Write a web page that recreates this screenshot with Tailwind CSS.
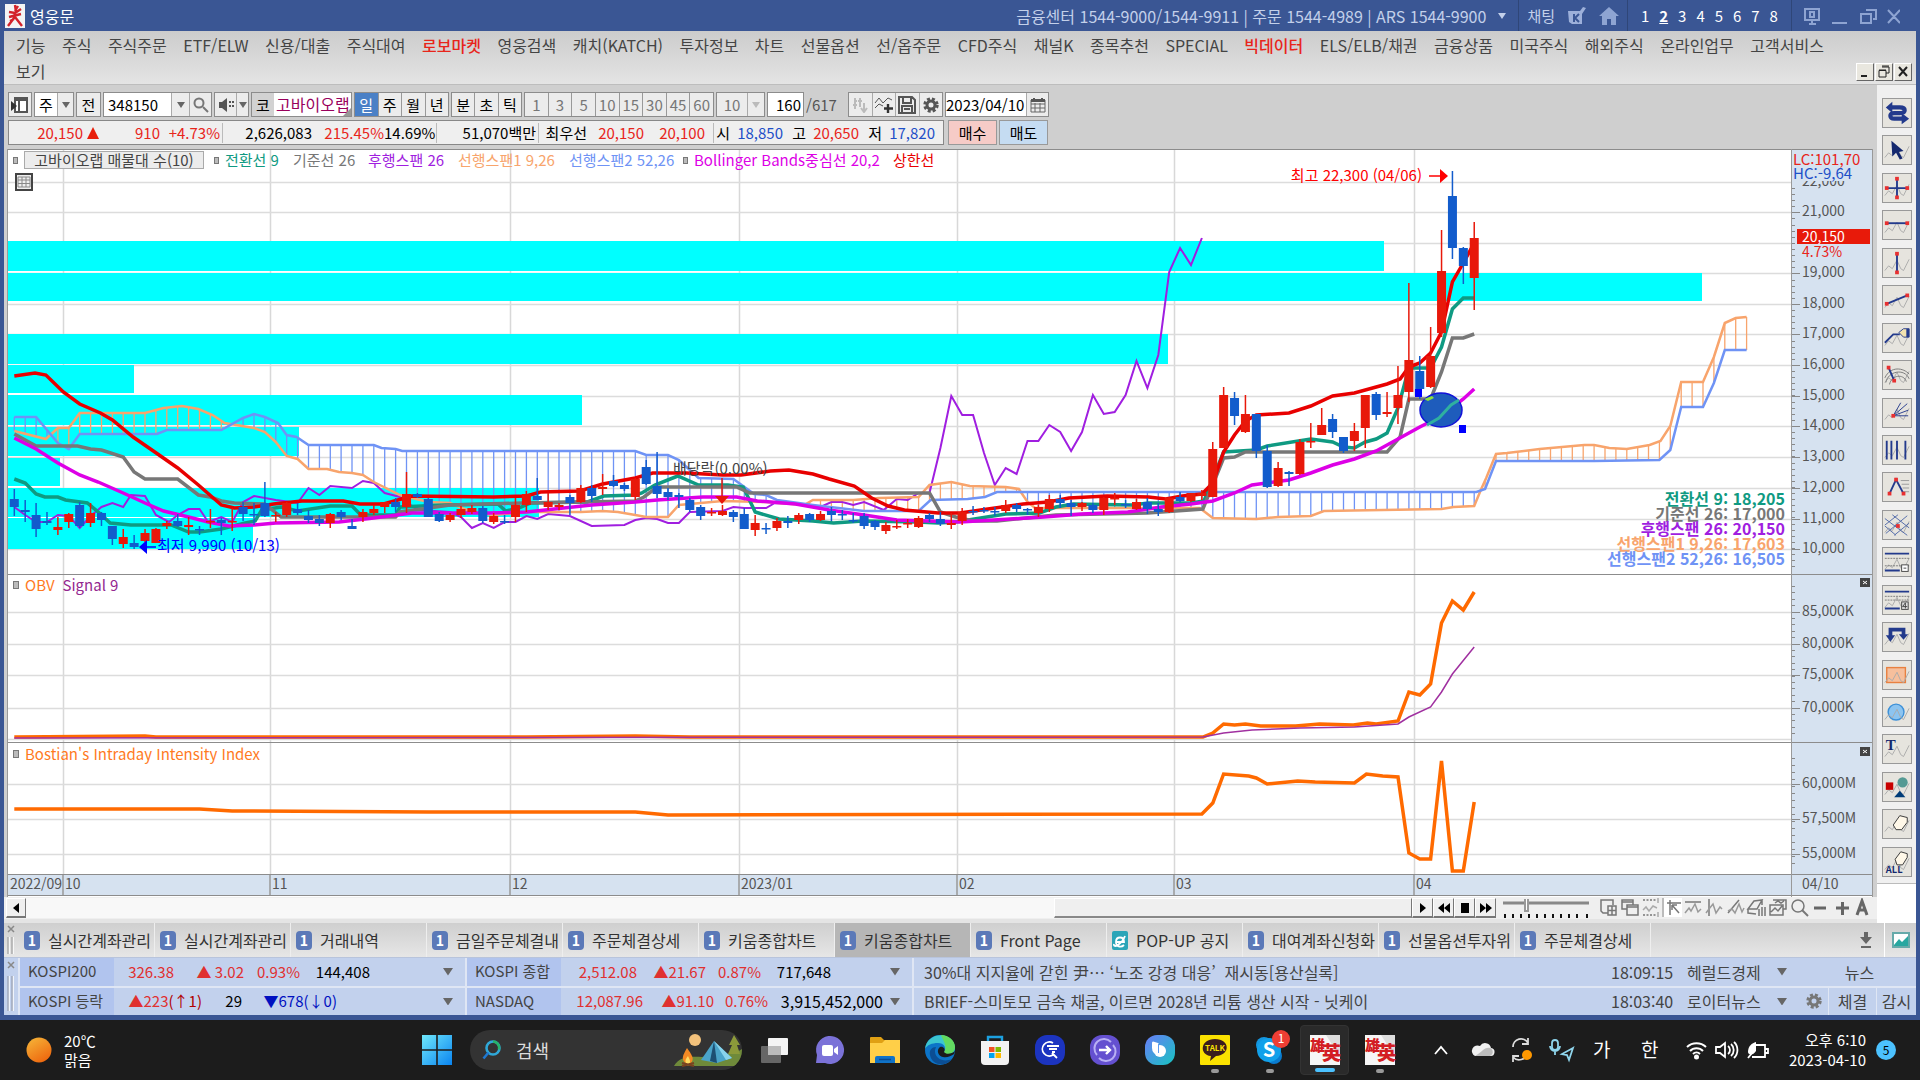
<!DOCTYPE html>
<html lang="ko">
<head>
    <meta charset="UTF-8">
    <meta name="viewport" content="width=device-width, initial-scale=1.0">
    <title>영웅문</title>
    <script src="https://cdn.jsdelivr.net/npm/@tailwindcss/browser@4"></script>
</head>
<body class="h-screen flex flex-col overflow-hidden bg-[#3a5694] font-['Noto_Sans_CJK_KR',sans-serif] text-base leading-5 text-[#444] whitespace-nowrap">

    <!-- title bar -->
    <header class="h-[31px] shrink-0 flex items-center pl-[5px] pr-5 text-[#c3d0ea]">
        <svg class="w-5 h-6 mr-[5px]" viewBox="0 0 20 24"><rect width="20" height="24" fill="#f4f4f4"/><path d="M10 1l1 7M13 2l-3 5M4 8l6 1 6-4M4 13l12-3M10 8l-1 6-6 8M10 13l7 9M5 17l4-2" stroke="#d3222a" stroke-width="2.4" fill="none"/></svg>
        <span class="text-white">영웅문</span>
        <div class="ml-auto flex items-center h-full">
            <span>금융센터 1544-9000/1544-9911 | 주문 1544-4989 | ARS 1544-9900</span>
            <svg class="w-2 h-2 ml-3" viewBox="0 0 8 8"><path d="M0 1h8L4 7z" fill="#c3d0ea"/></svg>
            <div class="w-px h-full bg-[#2f4678] ml-3 mr-2"></div>
            <button class="text-[15px]">채팅</button>
            <svg class="w-5 h-5 ml-3" viewBox="0 0 20 20"><path d="M1 5h12l3-4 3 1-4 6v10H5L2 16z" fill="#9db0da"/><path d="M7 8v8M12 8l-4 4 4 4" stroke="#3a5694" stroke-width="2" fill="none"/></svg>
            <svg class="w-5 h-5 ml-3 mr-2" viewBox="0 0 20 20"><path d="M10 1L0 10h3v9h5v-6h4v6h5v-9h3z" fill="#8ea4d2"/></svg>
            <div class="w-px h-full bg-[#2f4678]"></div>
            <nav class="flex w-[163px] justify-around px-2 text-white text-[15px]">
                <button>1</button><button class="underline font-bold">2</button><button>3</button><button>4</button><button>5</button><button>6</button><button>7</button><button>8</button>
            </nav>
            <div class="w-px h-full bg-[#2f4678] mr-3"></div>
            <svg class="w-24 h-5" viewBox="0 0 96 20" fill="none" stroke="#8ea4d2" stroke-width="2"><path d="M1 3h14v11H1zM5 18h7M8 14v4M6 6h4v5H6zM28 17h15M62 4h10v9h-3M57 8h10v9H57zM84 4l12 13M96 4L84 17"/></svg>
        </div>
    </header>

    <!-- menu -->
    <div class="h-[54px] shrink-0 mx-1 pl-3 pr-1 pt-1 bg-linear-to-b from-[#cccccc] to-[#e4e4e4] border-b border-[#bdbdbd]">
        <nav class="flex justify-between max-w-[1808px] h-5 items-center">
            <button>기능</button><button>주식</button><button>주식주문</button><button>ETF/ELW</button><button>신용/대출</button><button>주식대여</button><button class="text-[#e8251b] font-medium">로보마켓</button><button>영웅검색</button><button>캐치(KATCH)</button><button>투자정보</button><button>차트</button><button>선물옵션</button><button>선/옵주문</button><button>CFD주식</button><button>채널K</button><button>종목추천</button><button>SPECIAL</button><button class="text-[#e8251b] font-medium">빅데이터</button><button>ELS/ELB/채권</button><button>금융상품</button><button>미국주식</button><button>해외주식</button><button>온라인업무</button><button>고객서비스</button>
        </nav>
        <div class="flex justify-between items-start mt-1.5 h-5">
            <button>보기</button>
            <div class="flex gap-px mt-0.5">
                <button aria-label="최소화" class="w-[18px] h-[18px] bg-[#e9e7df] border border-white border-r-[#666] border-b-[#666]"><svg viewBox="0 0 16 16"><path d="M4 12h6" stroke="#222" stroke-width="2"/></svg></button>
                <button aria-label="이전 크기로" class="w-[18px] h-[18px] bg-[#e9e7df] border border-white border-r-[#666] border-b-[#666]"><svg viewBox="0 0 16 16" fill="none" stroke="#222"><path d="M6 3h7v6h-3M6 2h7M3 6.500h7V13H3zM3 6h7"/></svg></button>
                <button aria-label="닫기" class="w-[18px] h-[18px] bg-[#e9e7df] border border-white border-r-[#666] border-b-[#666]"><svg viewBox="0 0 16 16"><path d="M4 3l8 9M12 3l-8 9" stroke="#222" stroke-width="2"/></svg></button>
            </div>
        </div>
    </div>

    <div class="flex flex-1 min-h-0 mx-1 bg-[#cfcfcf]">
        <main class="flex-1 min-w-0 flex flex-col">

            <!-- chart toolbar -->
            <div class="h-[35px] shrink-0 flex items-center pt-1 pl-1 gap-0.5 text-[15px] text-black [&>div]:h-[25px] [&>div]:flex [&>div]:border [&>div]:border-[#8c8c8c] [&>div]:bg-[#ececec] [&_button]:h-full [&_button]:grid [&_button]:place-items-center">
                <div class="w-6"><button aria-label="목록" class="w-full"><svg class="w-5 h-5" viewBox="0 0 20 20"><path d="M5 3h12v14H5zM5 5h12M9 5v12" stroke="#555" stroke-width="2" fill="#fff"/><path d="M1 6l6 5-6 5z" fill="#333"/></svg></button></div>
                <div class="w-10"><button class="w-[22px] bg-white">주</button><button aria-label="종류" class="w-4 border-l border-[#aaa]"><svg class="w-2" viewBox="0 0 8 6"><path d="M0 0h8L4 6z" fill="#666"/></svg></button></div>
                <div class="w-[25px]"><button class="w-full">전</button></div>
                <div class="w-[109px]"><input aria-label="종목코드" value="348150" class="w-[67px] pl-1 bg-white"><button aria-label="종목 목록" class="w-[18px] border-l border-[#aaa]"><svg class="w-2" viewBox="0 0 8 6"><path d="M0 0h8L4 6z" fill="#666"/></svg></button><button aria-label="검색" class="w-[22px] border-l border-[#aaa]"><svg class="w-4" viewBox="0 0 16 16" fill="none" stroke="#777" stroke-width="2"><circle cx="6" cy="6" r="4.500"/><path d="M10 10l5 5"/></svg></button></div>
                <div class="w-[35px]"><button aria-label="소리" class="w-[21px]"><svg class="w-4" viewBox="0 0 16 16" fill="#555"><path d="M1 5h3l5-4v14l-5-4H1zM11 4h2v2h-2zM14 4h2v2h-2zM11 8h2v2h-2zM14 8h2v2h-2z"/></svg></button><button aria-label="소리 설정" class="w-3 border-l border-[#aaa]"><svg class="w-2" viewBox="0 0 8 6"><path d="M0 0h8L4 6z" fill="#666"/></svg></button></div>
                <div class="w-[101px] relative"><button class="w-[22px] bg-[#d2d2d2]">코</button><span class="flex-1 bg-white text-base text-[#99005c] leading-[22px] pl-0.5">고바이오랩</span><svg class="absolute right-0 bottom-0 w-2 h-2" viewBox="0 0 8 8"><path d="M8 0v8H0z" fill="#999"/></svg></div>
                <div class="w-[95px] divide-x divide-[#999] *:flex-1"><button class="bg-[#4a80c6] text-white">일</button><button>주</button><button>월</button><button>년</button></div>
                <div class="w-[71px] divide-x divide-[#999] *:flex-1"><button>분</button><button>초</button><button>틱</button></div>
                <div class="w-[190px] divide-x divide-[#999] *:flex-1 text-[#777]"><button>1</button><button>3</button><button>5</button><button>10</button><button>15</button><button>30</button><button>45</button><button>60</button></div>
                <div class="w-[49px] text-[#777]"><button class="w-[30px]">10</button><button aria-label="주기" class="w-4 border-l border-[#aaa]"><svg class="w-2" viewBox="0 0 8 6"><path d="M0 0h8L4 6z" fill="#bbb"/></svg></button></div>
                <div class="w-[37px]"><input aria-label="봉 개수" value="160" class="w-full bg-white text-right pr-0.5"></div>
                <span class="text-[#555] w-10">/617</span>
                <div class="w-[95px] divide-x divide-[#aaa] *:flex-1">
                    <button aria-label="캔들"><svg class="w-4" viewBox="0 0 16 16" stroke="#bbb" stroke-width="2" fill="none"><path d="M3 1v11M8 1v9M2 4h3M1 8h4M6 4h4M12 6v9M9 11l3 4 3-4"/></svg></button>
                    <button aria-label="지표 추가"><svg class="w-5" viewBox="0 0 20 20" stroke="#555" fill="none"><path d="M1 8l4-5 4 5 5-5 4 2M1 13l4-4 4 2"/><path d="M14 9v9M10 13.500h9" stroke-width="2.400" stroke="#333"/></svg></button>
                    <button aria-label="저장"><svg class="w-5" viewBox="0 0 20 20" stroke="#555" stroke-width="2" fill="none"><path d="M2 2h13l3 3v13H2zM6 2v6h8V2M5 18v-7h10v7M7 14h6"/></svg></button>
                    <button aria-label="설정"><svg class="w-4" viewBox="0 0 16 16"><circle cx="8" cy="8" r="6.200" fill="none" stroke="#555" stroke-width="3" stroke-dasharray="2.900 2"/><circle cx="8" cy="8" r="4" fill="none" stroke="#555" stroke-width="3"/></svg></button>
                </div>
                <div class="w-[104px]"><input aria-label="날짜" value="2023/04/10" class="w-20 bg-white"><button aria-label="달력" class="w-[22px] border-l border-[#aaa]"><svg class="w-4" viewBox="0 0 16 16"><path d="M1 3h14v12H1zM1 7h14M1 11h14M5 6v9M10 6v9" stroke="#666" fill="none"/><path d="M1 2h14v3H1zM3 1h2v2H3zM11 1h2v2h-2z" fill="#555"/></svg></button></div>
            </div>

            <!-- quote strip -->
            <div class="h-[29px] shrink-0 flex pl-1 pb-1 gap-1 text-[15px] text-black">
                <div class="w-[936px] flex items-center border border-[#888] bg-[#efefef] [&>span]:text-right">
                    <span class="w-[74px] text-[#e8251b]">20,150</span>
                    <svg class="w-3 h-3 ml-1" viewBox="0 0 12 12"><path d="M0 12L6 0l6 12z" fill="#e8200c"/></svg>
                    <span class="w-[61px] text-[#e8251b]">910</span>
                    <span class="w-[63px] pr-0.5 text-[#e8251b] border-r border-[#bbb]">+4.73%</span>
                    <span class="w-[89px]">2,626,083</span>
                    <span class="w-[72px] text-[#e8251b]">215.45%</span>
                    <span class="w-[53px] pr-0.5 border-r border-[#bbb]">14.69%</span>
                    <span class="w-[102px] pr-0.5 border-r border-[#bbb]">51,070백만</span>
                    <span class="w-12">최우선</span>
                    <span class="w-[57px] text-[#e8251b]">20,150</span>
                    <span class="w-[70px] pr-2 text-[#e8251b] border-r border-[#bbb]">20,100</span>
                    <span class="w-4">시</span>
                    <span class="w-[53px] text-[#1e50c8]">18,850</span>
                    <span class="w-[23px]">고</span>
                    <span class="w-[53px] text-[#e8251b]">20,650</span>
                    <span class="w-[23px]">저</span>
                    <span class="w-[53px] text-[#1e50c8]">17,820</span>
                </div>
                <button class="w-[49px] border border-[#999] bg-[#f6cbc7]">매수</button>
                <button class="w-[49px] -ml-0.5 border border-[#999] bg-[#c5dcf2]">매도</button>
            </div>

            <!-- chart -->
            <div class="relative flex-1 min-h-0 ml-[3px] mr-1">
                <svg id="chart" class="block w-full h-full" viewBox="7 149 1866 748" preserveAspectRatio="none" font-size="15"></svg>
                <div class="absolute left-1.5 top-[3px] right-24 flex items-center h-4 gap-2.5 text-[15px] [&>i]:w-[5px] [&>i]:h-[7px] [&>i]:bg-[#bbb] [&>i]:border [&>i]:border-[#777]">
                    <i></i>
                    <button class="-ml-1 w-[180px] h-[18px] leading-4 border border-[#aaa] bg-[#ececec]">고바이오랩 매물대 수(10)</button>
                    <i></i>
                    <span class="-ml-1 w-[58px] text-[#0f9a82]">전환선 9</span>
                    <span class="w-[65px] text-[#777]">기준선 26</span>
                    <span class="w-20 text-[#a01ee0]">후행스팬 26</span>
                    <span class="w-[101px] text-[#f8a46c]">선행스팬1 9,26</span>
                    <span class="w-[108px] text-[#6f93f5]">선행스팬2 52,26</span>
                    <i class="-ml-1"></i>
                    <span class="-ml-1 w-[189px] text-[#dd00e6]">Bollinger Bands중심선 20,2</span>
                    <span class="text-[#e80000]">상한선</span>
                </div>
                <button aria-label="표" class="absolute left-2 top-6 w-[18px] h-[18px] border-2 border-[#444] bg-[#eee]"><svg viewBox="0 0 14 14"><path d="M1 2h12v10H1zM1 5h12M1 8.500h12M5 2v10M9 2v10" stroke="#888" fill="none"/></svg></button>
                <div class="absolute left-1.5 top-[426px] flex items-center gap-2 text-[15px]">
                    <i class="w-[6px] h-2 bg-[#bbb] border border-[#777]"></i><span class="-ml-0.5 text-[#ff7a1e]">OBV</span><span class="text-[#93278f]">Signal 9</span>
                </div>
                <div class="absolute left-1.5 top-[595px] flex items-center gap-2 text-[15px]">
                    <i class="w-[6px] h-2 bg-[#bbb] border border-[#777]"></i><span class="-ml-0.5 text-[#ff7a1e]">Bostian's Intraday Intensity Index</span>
                </div>
            </div>

            <!-- scroll row -->
            <div class="h-[26px] shrink-0 flex items-start pt-px pl-0.5 pr-1 bg-[#efefef] border-b-4 border-[#e4e4e4]">
                <button aria-label="왼쪽" class="w-5 h-5 border border-white border-r-[#777] border-b-[#777] border-b-2 bg-[#efefef] grid place-items-center"><svg class="w-2" viewBox="0 0 8 10"><path d="M7 0v10L1 5z"/></svg></button>
                <div class="flex-1 h-5 bg-[#f8f8f8]"></div>
                <div class="w-[358px] h-5 border border-white border-r-[#777] border-b-[#888] border-b-2 bg-[#efefef]"></div>
                <div class="flex *:w-[21px] *:h-5 *:border *:border-white *:border-r-[#777] *:border-b-[#777] *:border-b-2 *:grid *:place-items-center">
                    <button aria-label="오른쪽"><svg class="w-2" viewBox="0 0 8 10"><path d="M1 0v10l6-5z"/></svg></button>
                    <button aria-label="뒤로"><svg class="w-3" viewBox="0 0 12 10"><path d="M6 0v10L0 5zM12 0v10L6 5z"/></svg></button>
                    <button aria-label="정지"><svg class="w-2" viewBox="0 0 8 10"><path d="M0 0h8v10H0z"/></svg></button>
                    <button aria-label="앞으로"><svg class="w-3" viewBox="0 0 12 10"><path d="M0 0v10l6-5zM6 0v10l6-5z"/></svg></button>
                </div>
                <label class="relative w-[104px] h-5"><input type="range" aria-label="속도" class="absolute inset-0 opacity-0"><svg class="w-[100px]" viewBox="0 0 100 20"><path d="M7 5h86" stroke="#888" stroke-width="3"/><path d="M32 1v12h-3V1" stroke="#999" stroke-width="2" fill="#fff"/><path d="M9 16v4M17 16v4M25 16v4M33 16v4M41 16v4M49 16v4M57 16v4M65 16v4M73 16v4M81 16v4M91 16v4" stroke="#111" stroke-width="2"/></svg></label>
                <svg class="w-[273px] h-5" viewBox="0 0 273 20" fill="none" stroke="#777" stroke-width="1.500">
                    <path d="M64 0h18v19H64z" fill="#fff" stroke="none"/><path d="M63 0v19" stroke="#aaa"/>
                    <path d="M8 15H3l-2-2V2h12v5M8 8h8v9H8zM8 12.500h8M12 8v9"/>
                    <path d="M22 2h11v9H22zM22 4h11"/><path d="M27 7h11v10H27zM27 9h11" fill="#efefef"/>
                    <path d="M43 2h14M43 17h14" stroke-dasharray="2 1.500"/><path d="M43 12l3-3 3 4 4-5 4 2M58 0v5M58 14v5" stroke="#aaa"/>
                    <path d="M67 5h14M70 2v15M72 7l7 8M72 7v5M72 7h5"/>
                    <path d="M85 4h16"/><path d="M85 15l4-5 2 3 4-7 3 8 3-3" stroke="#999"/>
                    <path d="M109 1v17"/><path d="M106 15l3-4 4-5 3 9 4-6 2 2" stroke="#999"/>
                    <path d="M128 15l11-13"/><path d="M128 13l4-2 3 4 4-9 3 8 2-4" stroke="#999"/>
                    <path d="M148 11l6-8 8-1-5 9zM148 11v4l8 1M162 2v5M159 11v7M162 9v9M165 9v9"/>
                    <path d="M173 2h13v9h-3M175 5l3-2 3 2 3-2"/><path d="M170 7h13v10h-13zM171 14l4-4 3 3 4-5" fill="#efefef"/>
                    <circle cx="198" cy="8" r="6"/><path d="M202 12l6 6" stroke-width="2"/>
                    <path d="M214 10h12M236 10h13M242.500 4v13" stroke="#666" stroke-width="3"/>
                    <path d="M257 17l5-14 5 14M259 12h7" stroke="#666" stroke-width="3"/>
                </svg>
            </div>
        </main>

        <!-- drawing tools -->
        <aside class="w-[39px] shrink-0 flex flex-col bg-white">
            <div id="tools" class="h-[799px] flex flex-col items-center justify-between pt-[13px] pb-[6px] bg-[#f0f0f0] border-b border-[#bbb]"></div>
        </aside>
    </div>

    <!-- window tabs -->
    <div class="h-[35px] shrink-0 mx-1 flex items-stretch bg-linear-to-b from-[#cfcfcf] to-[#e6e6e6] border-b border-[#b8c4dc]">
        <svg class="w-[15px] h-full" viewBox="0 0 15 34" fill="none" stroke="#888" stroke-width="1.500"><path d="M4 3l6 6M10 3l-6 6"/><path d="M5 14v17M9 14v17" stroke="#fff"/><path d="M4 14v17M8 14v17" stroke="#aaa"/></svg>
        <div id="tabs" class="flex flex-1 min-w-0"></div>
        <button aria-label="내리기" class="w-9 grid place-items-center"><svg class="w-3 h-4" viewBox="0 0 12 16" fill="#666"><path d="M4 0h4v5h4l-6 7-6-7h4zM1 14h10v2H1z"/></svg></button>
        <button aria-label="화면" class="w-8 border-l border-white grid place-items-center"><svg class="w-[18px] h-4" viewBox="0 0 18 16"><path d="M1 1h16v14H1z" fill="#fff" stroke="#6aa" stroke-width="2"/><path d="M2 13l5-6 3 3 6-6v10H2z" fill="#27a7a0"/></svg></button>
    </div>

    <!-- tickers -->
    <div class="h-[57px] shrink-0 mx-1 flex gap-0.5 bg-[#dfe6f4] text-[15px] text-[#444]">
        <svg class="w-[14px] h-full bg-[#c2d1ed]" viewBox="0 0 14 57" fill="none" stroke="#888" stroke-width="1.500"><path d="M4 4l6 6M10 4l-6 6"/><path d="M5 18v35M9 18v35" stroke="#fff"/><path d="M4 18v35M8 18v35" stroke="#a0a8bb"/></svg>
        <div class="w-[445px] grid grid-rows-2 gap-0.5">
            <div class="flex items-center bg-[#c2d1ed]"><span class="w-[94px] h-full pl-2 leading-[26px] bg-[#b1c4ee]">KOSPI200</span><span class="w-[60px] text-right text-[#e03030]">326.38</span><span class="w-[70px] text-right text-[#e03030]">▲ 3.02</span><span class="w-[56px] text-right text-[#e03030]">0.93%</span><span class="w-[70px] text-right text-black">144,408</span><svg class="w-2.5 ml-auto mr-3" viewBox="0 0 8 6"><path d="M0 0h8L4 6z" fill="#666"/></svg></div>
            <div class="flex items-center bg-[#c2d1ed]"><span class="w-[94px] h-full pl-2 leading-[26px] bg-[#b1c4ee]">KOSPI 등락</span><span class="w-[88px] text-right text-[#e03030]">▲223<b class="font-normal text-[#b00000]">(↑1)</b></span><span class="w-10 text-right text-black">29</span><span class="w-[95px] text-right text-[#0010c0]">▼678(↓0)</span><svg class="w-2.5 ml-auto mr-3" viewBox="0 0 8 6"><path d="M0 0h8L4 6z" fill="#666"/></svg></div>
        </div>
        <div class="w-[445px] grid grid-rows-2 gap-0.5">
            <div class="flex items-center bg-[#c2d1ed]"><span class="w-[94px] h-full pl-2 leading-[26px] bg-[#b1c4ee]">KOSPI 종합</span><span class="w-[76px] text-right text-[#e03030]">2,512.08</span><span class="w-[69px] text-right text-[#e03030]">▲21.67</span><span class="w-[55px] text-right text-[#e03030]">0.87%</span><span class="w-[70px] text-right text-black">717,648</span><svg class="w-2.5 ml-auto mr-3" viewBox="0 0 8 6"><path d="M0 0h8L4 6z" fill="#666"/></svg></div>
            <div class="flex items-center bg-[#c2d1ed]"><span class="w-[94px] h-full pl-2 leading-[26px] bg-[#b1c4ee]">NASDAQ</span><span class="w-[82px] text-right text-[#e03030]">12,087.96</span><span class="w-[71px] text-right text-[#e03030]">▲91.10</span><span class="w-[54px] text-right text-[#e03030]">0.76%</span><span class="w-[115px] text-right text-base text-black">3,915,452,000</span><svg class="w-2.5 ml-auto mr-3" viewBox="0 0 8 6"><path d="M0 0h8L4 6z" fill="#666"/></svg></div>
        </div>
        <div class="flex-1 grid grid-rows-2 gap-0.5 text-base">
            <div class="flex items-center bg-[#c2d1ed] pl-2.5"><a href="#">30%대 지지율에 갇힌 尹… ‘노조 강경 대응’&nbsp; 재시동[용산실록]</a><span class="ml-auto w-[76px]">18:09:15</span><span class="w-[90px]">헤럴드경제</span><svg class="w-2.5" viewBox="0 0 8 6"><path d="M0 0h8L4 6z" fill="#666"/></svg><button class="w-[129px] pl-4">뉴스</button></div>
            <div class="flex items-center bg-[#c2d1ed] pl-2.5"><a href="#">BRIEF-스미토모 금속 채굴, 이르면 2028년 리튬 생산 시작 - 닛케이</a><span class="ml-auto w-[76px]">18:03:40</span><span class="w-[90px]">로이터뉴스</span><svg class="w-2.5" viewBox="0 0 8 6"><path d="M0 0h8L4 6z" fill="#666"/></svg><button aria-label="설정" class="w-[41px] grid place-items-center pl-3"><svg class="w-4" viewBox="0 0 16 16"><circle cx="8" cy="8" r="6.200" fill="none" stroke="#777" stroke-width="3" stroke-dasharray="2.900 2"/><circle cx="8" cy="8" r="4" fill="none" stroke="#777" stroke-width="3"/></svg></button><button class="w-12 h-full border-l border-[#dfe6f4]">체결</button><button class="w-10 h-full border-l border-[#dfe6f4]">감시</button></div>
        </div>
    </div>
    <div class="h-[5px] shrink-0"></div>

    <!-- windows taskbar -->
    <footer class="h-[60px] shrink-0 bg-[#1c1c1c] text-white flex items-center pl-[26px] pr-6 text-[15px]">
        <div class="flex items-center gap-3 w-[396px] leading-[19px]">
            <svg class="w-[26px]" viewBox="0 0 26 26"><defs><linearGradient id="sun" x1="0" y1="0" x2=".6" y2="1"><stop stop-color="#f6b83a"/><stop offset="1" stop-color="#ee6a10"/></linearGradient></defs><circle cx="13" cy="13" r="12.500" fill="url(#sun)"/></svg>
            <span>20℃<br>맑음</span>
        </div>
        <button aria-label="시작" class="w-8"><svg class="w-[30px]" viewBox="0 0 30 30"><defs><linearGradient id="win" x1="0" y1="0" x2="1" y2="1"><stop stop-color="#6fe8fb"/><stop offset="1" stop-color="#0a84f0"/></linearGradient></defs><path d="M0 0h14.200v14.200H0zM15.800 0H30v14.200H15.800zM0 15.800h14.200V30H0zM15.800 15.800H30V30H15.800z" fill="url(#win)"/></svg></button>
        <label class="relative ml-4 mr-2 w-[272px] h-10 rounded-full bg-[#333] flex items-center overflow-hidden">
            <svg class="w-5 ml-3" viewBox="0 0 20 20" fill="none" stroke-width="2.600"><circle cx="11" cy="8" r="6.500" stroke="#2fa8d8"/><path d="M11 1.500a6.500 6.500 0 0 1 6 8" stroke="#27b36a"/><path d="M6.500 12.500L1.500 18.500" stroke="#1f78d0"/></svg>
            <input aria-label="검색" placeholder="검색" class="w-36 ml-3.5 text-lg bg-transparent placeholder:text-[#ddd]">
            <svg class="absolute right-0 bottom-0.5 w-[70px] h-9" viewBox="0 0 70 36"><path d="M2 34c4-8 14-10 28-9 20-3 32-2 40-8v17z" fill="#6f8a3a"/><circle cx="23" cy="8" r="6" fill="#f3c27c"/><path d="M42 9l-13 19 16 3 15-5z" fill="#4aa3c9"/><path d="M42 9l3 22-7-2z" fill="#1d4f73"/><path d="M42 9l18 17-6 2z" fill="#88d3ec"/><path d="M62 3l-5 10h3l-4 9h12l-3-9h3z" fill="#8c9a3a"/><path d="M15 32c-7-4-4-9 0-16 4 6 9 11 3 16z" fill="#f48a24"/><path d="M15 32c-3-3-1-5 1-8 2 4 3 6 1 8z" fill="#ffdc62"/><path d="M10 31l12 3M22 31l-12 3" stroke="#7a4220" stroke-width="2"/></svg>
        </label>
        <div id="apps" class="flex"></div>
        <div class="ml-auto flex items-center">
            <svg class="w-[370px] h-8" viewBox="0 0 370 32" fill="none" stroke="#fff" stroke-width="1.800">
                <path d="M9 20l6-7 6 7"/>
                <path d="M49 22h15a4 4 0 0 0 1-8 6 6 0 0 0-11-2 5 5 0 0 0-5 10z" fill="#f0f0f0" stroke="none"/><path d="M49 22h15a4 4 0 0 0-3-8c-3 0-5 4-12 8z" fill="#bcbcbc" stroke="none"/>
                <path d="M87 13a8 8 0 0 1 15-4M102 4v6h-6M101 19a8 8 0 0 1-14 4M87 28v-6h6" stroke="#ddd"/><circle cx="101" cy="21" r="5" fill="#ff9800" stroke="none"/>
                <path d="M126 9a3 3 0 0 1 6 0v4a3 3 0 0 1-6 0zM124 12a5 5 0 0 0 10 0M129 17v4M147 14l-11 6 5 1 2 5z" stroke="#8fd5ec"/>
                <g transform="translate(256 0)" stroke-width="2"><path d="M5 13a14 14 0 0 1 19 0M8 17a9 9 0 0 1 13 0M11 20a5 5 0 0 1 7 0"/><circle cx="14.500" cy="23" r="1.500" fill="#fff"/></g>
                <path d="M290 13h4l5-4v14l-5-4h-4zM302 12a5 5 0 0 1 0 8M305 10a8 8 0 0 1 0 12M308 8a11 11 0 0 1 0 16"/>
                <path d="M329 11h10v12h-13M339 15h3v4h-3"/><path d="M322 18c0-6 4-9 8-10v9c-3 5-8 4-8 1z" fill="#fff" stroke="none"/><path d="M322 24l4-5"/>
                <text x="167" y="23" font-size="19" fill="#fff" stroke="none">가</text>
                <text x="215" y="23" font-size="19" fill="#fff" stroke="none">한</text>
            </svg>
            <div class="flex flex-col items-end leading-5 w-[70px]"><span>오후 6:10</span><span>2023-04-10</span></div>
            <span class="ml-2.5 w-5 h-5 rounded-full bg-[#4cc2ff] text-black text-xs leading-5 text-center">5</span>
        </div>
    </footer>

    <script>
        // candles: [up, high, body top, body bottom, low], one per trading day
        const candles = [
            [0,489,499,507,516],[0,500,510,512,522],[0,503,515,529,537],[0,512,521,523,525],[1,517,527,530,535],[1,513,514,522,528],[0,502,505,526,528],[1,503,513,523,527],[0,512,513,520,526],[0,526,526,539,545],
            [1,529,537,544,548],[0,535,543,547,549],[1,529,533,541,542],[1,528,529,543,543],[1,521,523,526,529],[0,514,521,526,527],[1,517,525,527,535],[0,526,529,530,535],[1,509,521,522,528],[0,518,520,523,535],
            [1,508,521,522,531],[0,502,507,514,521],[0,503,514,515,525],[0,482,503,516,517],[1,512,515,516,522],[1,502,503,515,517],[0,503,509,513,515],[0,510,516,520,523],[0,515,519,523,526],[1,513,514,523,528],
            [0,510,512,517,520],[0,519,526,529,529],[1,509,512,517,522],[1,505,509,513,515],[1,502,502,507,513],[0,498,502,507,512],[1,472,494,507,513],[0,493,494,497,498],[0,498,499,517,517],[0,512,514,521,522],
            [1,513,515,520,522],[1,506,509,515,518],[1,505,508,512,514],[0,506,508,521,523],[1,513,516,522,524],[0,515,521,522,524],[1,498,505,517,522],[1,491,494,505,512],[0,478,496,500,500],[1,493,502,507,510],
            [1,503,505,507,510],[0,495,497,503,515],[1,485,488,502,503],[0,485,488,496,502],[1,474,487,489,495],[0,475,481,486,487],[0,483,485,489,491],[1,478,479,497,500],[0,460,467,484,485],[0,452,486,494,498],
            [0,488,492,497,500],[0,493,495,497,508],[0,498,500,510,512],[0,505,507,516,520],[1,508,512,513,516],[1,505,511,515,516],[0,510,512,517,522],[0,508,514,529,529],[1,515,523,530,536],[0,523,528,529,534],
            [1,518,521,528,531],[0,516,521,523,528],[1,513,515,520,524],[0,513,514,520,522],[1,511,514,520,521],[0,507,511,515,521],[0,510,514,515,520],[0,513,520,521,523],[0,513,516,526,529],[0,520,521,527,530],
            [1,522,525,531,534],[1,520,526,527,529],[1,519,523,524,528],[1,516,518,527,528],[0,513,515,519,522],[0,512,519,524,526],[1,513,523,525,529],[1,508,512,521,525],[0,506,511,512,515],[0,507,510,511,513],
            [0,507,511,512,516],[1,500,505,511,513],[0,503,505,509,512],[0,508,509,510,515],[1,505,507,513,517],[1,495,499,509,512],[0,495,499,503,508],[0,500,503,507,516],[1,502,503,507,511],[0,503,505,510,513],
            [1,497,498,510,515],[1,493,498,499,505],[0,500,504,505,508],[1,499,502,509,510],[0,498,502,509,514],[0,503,509,512,516],[1,497,498,512,513],[0,492,497,501,502],[1,493,493,501,502],[1,490,493,496,500],
            [1,442,449,497,497],[1,387,395,448,448],[0,392,398,416,425],[1,395,414,432,433],[0,414,414,451,458],[0,445,451,487,488],[1,462,468,486,487],[0,471,472,474,486],[1,439,442,474,475],[1,423,441,442,448],
            [1,408,425,435,435],[0,414,419,432,438],[0,437,437,451,453],[1,423,431,441,451],[1,395,395,428,448],[0,392,394,415,420],[1,392,412,414,417],[1,366,395,408,424],[1,283,360,392,402],[0,356,371,389,399],
            [1,327,356,387,388],[1,230,271,333,337],[0,171,196,248,259],[0,247,248,266,284],[1,222,238,278,310]
        ];

        // indicator lines: day index, y, day index, y ...
        const upper = [0,376,1.9,373,2.9,375,4.5,392,6,404,7.9,413,9,420,10.9,437,12.9,452,15,468,16.9,485,19,505,20.2,508,22,507,23.8,504,26.4,501,30.2,501,31.7,504,33.9,504,35.2,500,36.5,496,44,497,47,496,48.3,492,51.9,491,54,484,57,478,58.6,473,61.7,473,65,475,66.7,475,69.4,471,71.1,470,73.3,474,74.8,479,77.1,486,78.7,498,80.2,506,81.7,510,84.8,513,86.8,513,88.7,510,92.6,504,94.9,502,96.8,498,100.3,496,104.1,497,105.7,499,107.2,496,109,494,110,483,111,452,112,435,113,421,114,415,117,413,119,406,121,396,123,393,126,384,127.2,379,128,367,129,363,130,353,131,332,132,282,133,263,134,243];
        const middle = [0,438,2,449,4,463,6,475,7.7,482,10,493,12,503,13.7,511,16,517,17.8,522,19.7,526,22,525,24,523,29.8,522,33,518,36.5,513,43.6,513,47,512,53,505,57,502,59,500,63.2,497,66.3,497,68.2,501,71.7,504,74.8,510,78,515,81,520,86.8,522,89.9,520,94.5,517,98,514,102.2,512,105.3,507,108,504,110,501,112,493,113.6,485,117,480,119,473,121,465,123,459,125,451,127,439,129,427,131,416,133,399,134,389];
        const conversion = [0,479,1,483,2,494,2.8,497,4,497,4.7,500,6.7,503,7.7,512,8.8,523,10.7,525,14.4,525,16,532,17,532,19,529,21.2,523,22.1,521,22.7,510,24.5,507,26,511,29,506,31,506,31.8,515,35,515,35.4,507,39.5,505,44.4,504,45.1,511,46.3,508,47.4,503,52.6,502,54.1,496,57,495,57.6,493,58.8,485,60.9,476,62.8,485,65.5,485,66.9,487,68,512,70.2,519,73.3,521,75.2,523,77.9,521,82.9,522,84.8,523,86.4,522,88.7,518,91,514,94.1,513,95.6,507,97.2,504,102.6,505,104.1,503,108,503,109.2,501,111,452,114,450,115,446,119,439,121,442,122,447,123,448,124,442,125,439,126,433,127,408,128,368,130,368,131,347,132,309,133,298,134,298];
        const base = [0,434,2,446,5.8,446,7,449,8,450,10,457,11,472,12,479,15,479,16.9,495,18,497,19,501,20.2,503,23,504,24.5,517,35,517,35.4,512,40,505,46.6,503,57,501,57.8,497,59,487,66.3,487,67.5,493,84,493,85,512,86.4,517,88,521,90.2,521,95.6,515,104,513,109.1,509,111,458,112,457,113,452,126,452,127.2,437,128,399,130,399,131,372,132,338,133,338,134,334];
        const lagging = [0,507,1,515,2,522,3,522,4,515,5,516,6,528,7,516,8,507,9,503,10,507,10.7,495,12,496,13,515,14.2,522,15,515,16,509,17,509,17.8,522,19,517,20,522,21,502,22,496,24,500,26,503,27,488,28,495,29,486,31,488,32,481,33,483,34,493,35.4,497,37,510,40,512,41,517,42,528,43,523,44,528,45,522,46,522,47,516,48,519,49,514,51,516,53,526,56,525,57,520,58,518,59,519,60,523,61,523,62,512,65,511,66,507,67,508,69,508,69.8,503,71.7,504,74,507,75,502,76,502,77,505,78,502,79.8,510,81,499,82,500,83,493,84,493,85,448,86,396,87,415,88,415,89,453,90,485,91,468,92,474,93,441,94,441,95,425,96,432,97,451,98,432,99,395,100,414,101,412,102,395,103,361,104,388,105,355,106,272,107,248,108,265,109,238];
        const span1 = [0,431,2.9,439,4,428,5,428,6,413,12,413,13.7,408,15.4,406,16.9,409,18.2,415,19.3,423,22,428,23,432,24,442,25,456,26,459,27,469,28.7,469,29.8,472,31,473,32,475,33,482,35.4,495,38,502,40,503,42,512,44,515,47,512,52,512,54,511,55.4,512,57,515,58,517,60,517,61,505,63,503,65,501,69,502,72.5,505,73.3,500,77,500,79.4,498,83,497,84,485,86,482,87.7,486,91,487,92.2,489,93,502,93.7,508,108.8,508,110,518,114,519,116,517,119,516,120.2,511,131,509,132.1,507,134,506,134.6,490,135.1,478,136,454,137,453,140,449,144.1,445,145,445,146.4,448,148,449,150.1,445,151.1,441,152,426,153,382,155,382,156,357,157,323,158,318,159,317];
        const span2 = [0,417,2,417,4,443,5,449,6,434,13.1,434,14,430,19,430,21,418,22,414,23,417,24.2,423,25,435,25.9,437,27,445,33,445,33.7,448,35,449,35.6,451,57,451,58,455,60,455,61,460,62.8,478,66,479,67.9,494,69,495,70,500,73.3,505,78,511,83,511,84.1,500,87.5,499,89.1,497,90.2,492,134.2,492,135,489,136,461,145,461,151,460,152,450,153,407,155,407,156,383,157,350,159,350];
        const obv = [0,737,12,736,13,737,47,737,57,736,62,737,109.1,737,110,733,111,724,112,725,113,724,114.4,726,117.6,726,119.8,724,122.9,725,124.2,723,125,724,127,721,128,692,129,695,130,684,131,623,132,601,133,610,134,592];
        const signal = [0,738,109.1,737,111,733,113.6,730,118,728,123,727,127,724,128,717,130,707,131,692,132,674,134,647];
        const intensity = [0,809,17,809,20,811,38,812,57,812,60,815,109,814,110,803,111,774,113.3,776,114,778,115,784,117.8,781,119.4,782,123,783,124.1,774,125.6,776,127,777,128,853,129,859,130,859,131,761,132,871,133,871,134,802];

        const xAt = i => 14.3 + i * 10.895;

        function line(data, color, width) {
            let pts = '';
            for (let k = 0; k < data.length; k += 2) pts += `${xAt(data[k]).toFixed(1)},${data[k + 1]} `;
            return `<polyline points="${pts}" fill="none" stroke="${color}" stroke-width="${width}"/>`;
        }

        function valueAt(data, i) {
            for (let k = 2; k < data.length; k += 2) {
                if (i <= data[k]) {
                    const t = (i - data[k - 2]) / (data[k] - data[k - 2]);
                    return data[k - 1] + t * (data[k + 1] - data[k - 1]);
                }
            }
            return data[data.length - 1];
        }

        function hline(x1, x2, y, color) {
            return `<path d="M${x1} ${y + .5}H${x2}" stroke="${color}"/>`;
        }

        let out = '<rect x="7" y="149" width="1866" height="748" fill="#fff"/>';
        // price grid
        const priceY = [549, 519, 488, 457, 426, 396, 365, 334, 304, 273, 243, 212, 182];
        [...priceY, 612, 644, 675, 708, 739, 784, 819, 854].forEach(y => out += `<path d="M8 ${y + .5}H1791" stroke="#dcdcdc" stroke-width="1.500"/>`);
        // volume profile
        [[241,30,1384],[273,28,1702],[334,30,1168],[365,28,134],[395,30,582],[427,29,299],[458,28,60],[488,29,539],[518,31,253]].forEach(([y, h, x]) => {
            out += `<rect x="8" y="${y}" width="${x - 8}" height="${h}" fill="#00ffff"/>`;
        });
        const months = [[63,'10'],[270,'11'],[510,'12'],[739,'2023/01'],[957,'02'],[1174,'03'],[1414,'04']];
        // month lines stay behind the volume profile
        let back = '';
        months.forEach(([x]) => back += `<path d="M${x + .5} 150V874" stroke="#d8d8d8" stroke-width="1.500"/>`);
        out = out.replace('fill="#fff"/>', 'fill="#fff"/>' + back);

        // cloud
        for (let i = 0; i <= 159; i++) {
            const a = valueAt(span1, i), b = valueAt(span2, i);
            out += `<path d="M${xAt(i).toFixed(1)} ${a.toFixed(1)}V${b.toFixed(1)}" stroke="${b < a ? '#6f93f5' : '#f8a46c'}" stroke-width="1.300"/>`;
        }
        out += line(lagging, '#a01ee0', 2);
        out += line(span1, '#f8a46c', 2.5) + line(span2, '#6f93f5', 2.5);
        out += line(conversion, '#0f9a82', 3.5) + line(base, '#777', 3.5) + line(middle, '#dd00e6', 3.5) + line(upper, '#e80000', 3.5);
        candles.forEach(([up, h, t, b, l], i) => {
            const c = up ? '#e8180a' : '#125ccc', x = xAt(i);
            out += `<path d="M${x} ${h}V${l}" stroke="${c}" stroke-width="1.500"/><rect x="${x - 4.5}" y="${t}" width="9" height="${Math.max(b - t, 1.5)}" fill="${c}"/>`;
        });

        // marker drawn by the user
        out += '<ellipse cx="1441" cy="410" rx="21" ry="17" fill="#1e5cbc" stroke="#1212d8" stroke-width="1.500"/><path d="M1427 425l12-7 12-13 8-5" stroke="#2fb0a0" stroke-width="3" fill="none"/><path d="M1424 399l8-3 2 2-6 3z" fill="#8fe03c"/>';
        out += '<path d="M1415 389h7v8h-7zM1459 425h7v8h-7z" fill="#0000ff"/>';
        out += '<path d="M1429 176h14" stroke="#f00" stroke-width="1.500"/><path d="M1440 169l8 7-8 7z" fill="#f00"/><text x="1422" y="181" text-anchor="end" fill="#f00">최고 22,300 (04/06)</text>';
        out += '<path d="M143 547h13" stroke="#00f" stroke-width="1.500"/><path d="M147 540l-8 7 8 7z" fill="#00f"/><text x="157" y="551" fill="#00f">최저 9,990 (10/13)</text>';
        out += '<path d="M722 478v20" stroke="#e8180a" stroke-width="1.500"/><path d="M715 496h14l-7 8z" fill="#e8180a"/><text x="673" y="474" fill="#444">배당락(0.00%)</text>';
        [['전환선 9: 18,205','#0f9a82'],['기준선 26: 17,000','#777'],['후행스팬 26: 20,150','#a01ee0'],['선행스팬1 9,26: 17,603','#f8a46c'],['선행스팬2 52,26: 16,505','#6f93f5']].forEach(([t, c], k) => {
            out += `<text x="1785" y="${505 + k * 15}" text-anchor="end" font-size="16" font-weight="bold" fill="${c}">${t}</text>`;
        });

        // lower panels
        out += line(obv, '#ff6a00', 3.5) + line(signal, '#a030a0', 1.5) + line(intensity, '#ff6a00', 3.5);

        // axes
        out += '<rect x="1791" y="150" width="82" height="746" fill="#d6e2f0"/><rect x="7" y="874" width="1866" height="22" fill="#d6e2f0"/>';
        for (let y = 188; y < 570; y += 6.1) out += hline(1791, 1795, Math.round(y), '#888');
        for (let y = 586; y < 738; y += 6.4) out += hline(1791, 1795, Math.round(y), '#888');
        for (let y = 758; y < 870; y += 7) out += hline(1791, 1795, Math.round(y), '#888');
        const axis = (x, y, t) => `<text x="${x}" y="${y}" font-size="14" fill="#555">${t}</text>`;
        out += axis(1802, 186, '22,000') + '<rect x="1793" y="150" width="78" height="31" fill="#d6e2f0"/>';
        priceY.forEach((y, k) => {
            if (k === 10 || k === 12) return;
            out += hline(1791, 1800, y, '#888') + axis(1802, y + 4, `${10 + k},000`);
        });
        out += '<text x="1793" y="165" fill="#e8251b">LC:101,70</text><text x="1793" y="179" fill="#1e50c8">HC:-9,64</text>';
        out += '<rect x="1797" y="229" width="73" height="15" fill="#e81a0a"/><text x="1802" y="242" font-size="14" fill="#fff">20,150</text><text x="1802" y="257" font-size="14" fill="#e8251b">4.73%</text>';
        [[612,'85,000K'],[644,'80,000K'],[675,'75,000K'],[708,'70,000K'],[784,'60,000M'],[819,'57,500M'],[854,'55,000M']].forEach(([y, t]) => {
            out += hline(1791, 1800, y, '#888') + axis(1802, y + 4, t);
        });
        out += axis(1802, 889, '04/10') + axis(10, 889, '2022/09');
        months.forEach(([x, t]) => out += `<path d="M${x} 874v22" stroke="#999" stroke-width="1.500"/>` + axis(x + 2, 889, t));
        [149, 574, 742, 874, 895].forEach(y => out += hline(7, 1873, y, '#8c8c8c'));
        out += '<path d="M7.500 149v748M1791.500 149v748M1872.500 149v748" stroke="#999"/>';
        [583, 752].forEach(y => out += `<rect x="1860" y="${y - 5}" width="10" height="9" fill="#444"/><path d="M1863 ${y - 2}l4 3M1867 ${y - 2}l-4 3" stroke="#fff"/>`);
        document.getElementById('chart').innerHTML = out;

        // drawing tool icons
        const wave = '<path d="M2 22l4-5 4 3 5-9 4 9 3 2 6-12" stroke="#aaa" fill="none"/>';
        const dot = (x, y) => `<rect x="${x - 2}" y="${y - 2}" width="4" height="4" fill="#e83030"/>`;
        const navy = d => `<path d="${d}" stroke="#233a8c" stroke-width="2" fill="none"/>`;
        const tools = [
            ['순서', '<path d="M7 8h11c7 0 7 6 0 6h-6c-6 0-5 6 0 6h9" stroke="#233a8c" stroke-width="4.500" fill="none"/><path d="M10 2v12L3 8zM20 14v12l8-6z" fill="#233a8c"/>'],
            ['선택', wave + '<path d="M9 4l13 11-5 1 4 7-3 1-4-7-4 4z" fill="#14286e"/>'],
            ['십자선', wave + navy('M4 14h22M15 4v20') + dot(4, 14) + dot(26, 14) + dot(15, 4) + dot(15, 24)],
            ['수평선', wave + navy('M4 12h22') + dot(4, 12) + dot(26, 12)],
            ['수직선', wave + navy('M15 4v20') + dot(15, 4) + dot(15, 24)],
            ['추세선', wave + navy('M4 18L26 9') + dot(4, 18) + dot(26, 9)],
            ['연필', wave + navy('M2 19l9-9h7') + '<path d="M17 8l5-4h6v9h-6z" fill="#f2e2b0" stroke="#233a8c"/><path d="M25 4h3v9h-3z" fill="#233a8c"/>'],
            ['호', wave + '<path d="M3 22c2-12 20-16 25-4M7 24c2-10 15-12 18-3M2 17C8 4 22 6 28 13" stroke="#777" fill="none"/>' + navy('M6 6l6 14') + dot(6, 6) + dot(12, 20)],
            ['부채꼴', wave + '<path d="M11 18h16M11 18l16-6M11 18L26 5M11 18l8-14" stroke="#233a8c" fill="none"/>' + dot(11, 18)],
            ['시간대', wave + navy('M4 4v20M9 4v20M15 4v20M24 4v20')],
            ['패턴', '<path d="M19 7h9M20 11h8M21 15h7M22 19h6" stroke="#999"/>' + navy('M7 21l7-15 8 15') + dot(7, 21) + dot(14, 6) + dot(22, 21)],
            ['격자', wave + '<path d="M2 7l24 18M2 15l12 10M10 3l18 14M3 23L26 4M12 25L28 12M2 14L16 3" stroke="#5068a8" fill="none"/>' + dot(16, 15)],
            ['채널 1', wave + navy('M2 5h26M2 23h16') + '<path d="M2 10h26M2 18h26" stroke="#777" stroke-dasharray="2 1"/><rect x="20" y="17" width="7" height="7" fill="#fff" stroke="#444"/><path d="M22 20.500h3" stroke="#444"/>'],
            ['채널 4', wave + navy('M2 5h26M2 23h16') + '<path d="M2 10h26M2 14h26" stroke="#777" stroke-dasharray="2 1"/><rect x="20" y="16" width="7" height="8" fill="#ddd" stroke="#444"/><path d="M24 17l-3 4h5M24 17v6" stroke="#444" fill="none"/>'],
            ['구간', wave + '<path d="M8 13V6h14v6" stroke="#233a8c" stroke-width="4" fill="none"/><path d="M3 12h10l-5 7zM17 11h10l-5 6z" fill="#233a8c"/>'],
            ['사각형', '<rect x="4" y="6" width="20" height="16" fill="#f6bf9c" stroke="#e88040" stroke-width="1.500"/>' + wave],
            ['원', '<circle cx="14" cy="14" r="8.500" fill="#8cc4f0" stroke="#3c90d8" stroke-width="1.500"/>' + wave],
            ['문자', wave + '<text x="3" y="15" font-size="16" font-weight="bold" font-family="Liberation Serif" fill="#14286e">T</text>'],
            ['도형', wave + '<circle cx="21" cy="9" r="5.500" fill="#559a94"/><path d="M3 9h8v8H3z" fill="#c80000"/><path d="M12 25l6-7 6 7z" fill="#003c78"/>'],
            ['지우개', wave + '<path d="M11 15l7-10 8 2v5l-6 8h-6z" fill="#fff8e8" stroke="#333"/>'],
            ['모두 지우기', wave + '<path d="M13 11l6-8 7 2v4l-5 8h-6z" fill="#fff8e8" stroke="#333"/><text x="3" y="26" font-size="10" font-weight="bold" fill="#14286e">ALL</text>']
        ];
        document.getElementById('tools').innerHTML = tools.map(([name, svg]) =>
            `<button aria-label="${name}" class="w-[30px] h-[30px] border border-[#999] bg-[#e6e4de]"><svg viewBox="0 0 30 28">${svg}</svg></button>`).join('');

        // tabs
        const tabs = ['실시간계좌관리', '실시간계좌관리', '거래내역', '금일주문체결내', '주문체결상세', '키움종합차트', '키움종합차트', 'Front Page', 'POP-UP 공지', '대여계좌신청화', '선물옵션투자위', '주문체결상세'];
        document.getElementById('tabs').innerHTML = tabs.map((t, i) => {
            const badge = i === 8
                ? '<svg class="w-4 h-[19px] shrink-0" viewBox="0 0 16 19"><rect width="16" height="19" rx="2" fill="#2ba5b8"/><path d="M4 11h8c0-6-8-6-8 0s6 5 8 3M2 13c-1 5 8 0 11-8" stroke="#fff" stroke-width="1.800" fill="none"/></svg>'
                : '<span class="w-4 h-[19px] shrink-0 rounded-sm bg-[#5b79b8] text-white text-sm font-bold leading-[19px] text-center">1</span>';
            return `<button class="w-[136px] shrink-0 flex items-center gap-2 pl-[5px] overflow-hidden border-r border-[#eee] text-[#333] ${i === 6 ? 'bg-[#b6b6b6]' : ''}">${badge}<span>${t}</span></button>`;
        }).join('');

        // taskbar apps
        const hero = '<rect width="30" height="30" fill="#f6f6f6"/><path d="M16 0h14v22z" fill="#ddd"/><g fill="#d31d24" font-weight="900"><text x="0" y="16" font-size="15">雄</text><text x="12" y="25" font-size="19">英</text></g>';
        const apps = [
            ['작업 보기', '<rect x="1" y="11" width="20" height="17" rx="1" fill="#666"/><rect x="8" y="3" width="20" height="17" rx="1" fill="#f4f4f4"/><path d="M8 11h13v9H8z" fill="#bbb"/>'],
            ['채팅', '<path d="M1 28l1-8a14 14 0 1 1 8 8z" fill="#7b72d8"/><rect x="7" y="10" width="11" height="11" rx="2" fill="#fff"/><path d="M19 14l4-3v9l-4-3z" fill="#fff"/>'],
            ['파일 탐색기', '<path d="M0 3q0-1 1-1h10l3 3h15q1 0 1 1v22H0z" fill="#e0a014"/><path d="M0 8h12l3-3h15v23H0z" fill="#ffcf48"/><path d="M5 28v-5q0-2 2-2h16q2 0 2 2v5z" fill="#1073c8"/><path d="M9 24.500h12" stroke="#0a4a90" stroke-width="1.500"/>'],
            ['Edge', '<circle cx="15" cy="15" r="15" fill="#0c74c8"/><path d="M0 14C2-4 28-4 30 12c0 8-10 9-11 5 3-4 0-9-6-9C7 8 2 10 0 14z" fill="#3cc6d0"/><path d="M16 0c8 0 14 6 14 12 0 8-10 9-11 5 4-6-1-11-3-17z" fill="#62da60"/><path d="M11 12c-4 8 4 17 16 12-6 8-20 7-22-4-1-5 2-8 6-8z" fill="#0b4e94"/><path d="M15 12c-4 3-2 9 3 10 4 1 8-1 11-3l1-3c-3 3-9 4-11 1 2-3-1-6-4-5z" fill="#1c1c1c"/>'],
            ['Store', '<path d="M8 8V2h14v6" stroke="#1ca0e0" stroke-width="2.400" fill="none"/><path d="M1 6h28v20q0 4-4 4H5q-4 0-4-4z" fill="#f2f2f2"/><path d="M9 12h5.500v5H9z" fill="#f25022"/><path d="M15.500 12H21v5h-5.500z" fill="#7fba00"/><path d="M9 18h5.500v5H9z" fill="#00a4ef"/><path d="M15.500 18H21v5h-5.500z" fill="#ffb900"/>'],
            ['Quick Search', '<rect width="30" height="30" rx="12" fill="#1c34c0"/><path d="M18 8a7 7 0 1 0 0 12M17 18l5 5M12 11h12M14 14h8M17 17h3" stroke="#fff" stroke-width="1.800" fill="none"/>'],
            ['Switch', '<rect width="30" height="30" rx="12" fill="#6450d0"/><path d="M7 20a9.500 9.500 0 0 1 14-13M23 10a9.500 9.500 0 0 1-14 13" stroke="#b8b0f4" stroke-width="2" fill="none"/><path d="M9 15h10M16 11l4 4-4 4" stroke="#fff" stroke-width="2.400" fill="none"/>'],
            ['Bixby', '<defs><linearGradient id="bx" x1="0" y1="0" x2="1" y2="1"><stop stop-color="#6a7cf8"/><stop offset="1" stop-color="#16c4c0"/></linearGradient></defs><rect width="30" height="30" rx="12" fill="url(#bx)"/><path d="M8 6.500l5 1.500q1 .5 1 2v10q-7-1-7-7V8q0-1.500 1-1.500z" fill="#fff"/><circle cx="15" cy="16" r="6" fill="#fff"/><path d="M13.500 9v9" stroke="#5a9af0" stroke-width="1"/>'],
            ['KakaoTalk', '<rect width="30" height="30" rx="1" fill="#fae100"/><path d="M15 4C0 4-1 20 11 21l-1 5 6-5C31 20 30 4 15 4z" fill="#3a1d1d"/><text x="15" y="16" font-size="8" font-weight="bold" text-anchor="middle" fill="#fae100">TALK</text>'],
            ['Skype', '<circle cx="9" cy="10" r="8" fill="#1496e0"/><circle cx="19" cy="21" r="8" fill="#0a7cd0"/><circle cx="14" cy="15" r="12" fill="#12a0ea"/><text x="14" y="22" font-size="20" font-weight="bold" text-anchor="middle" fill="#fff">S</text><circle cx="26" cy="4" r="9" fill="#ee3e34"/><text x="26" y="8" font-size="12" text-anchor="middle" fill="#fff">1</text>'],
            ['영웅문', hero],
            ['영웅문 주문', hero]
        ];
        document.getElementById('apps').innerHTML = apps.map(([name, svg], i) => {
            let bar = '';
            if (i === 10) bar = '<span class="absolute bottom-0.5 left-1/2 -translate-x-1/2 w-5 h-1 rounded-full bg-[#4cc2ff]"></span>';
            else if (i > 7) bar = '<span class="absolute bottom-0.5 left-1/2 -translate-x-1/2 w-2 h-1 rounded-full bg-[#999]"></span>';
            return `<button aria-label="${name}" class="relative w-[49px] h-[50px] mr-1.5 rounded grid place-items-center ${i === 10 ? 'bg-[#2a2a2a] border border-[#333]' : ''}"><svg class="w-[30px] h-[30px] overflow-visible" viewBox="0 0 30 30">${svg}</svg>${bar}</button>`;
        }).join('');
    </script>
</body>
</html>
